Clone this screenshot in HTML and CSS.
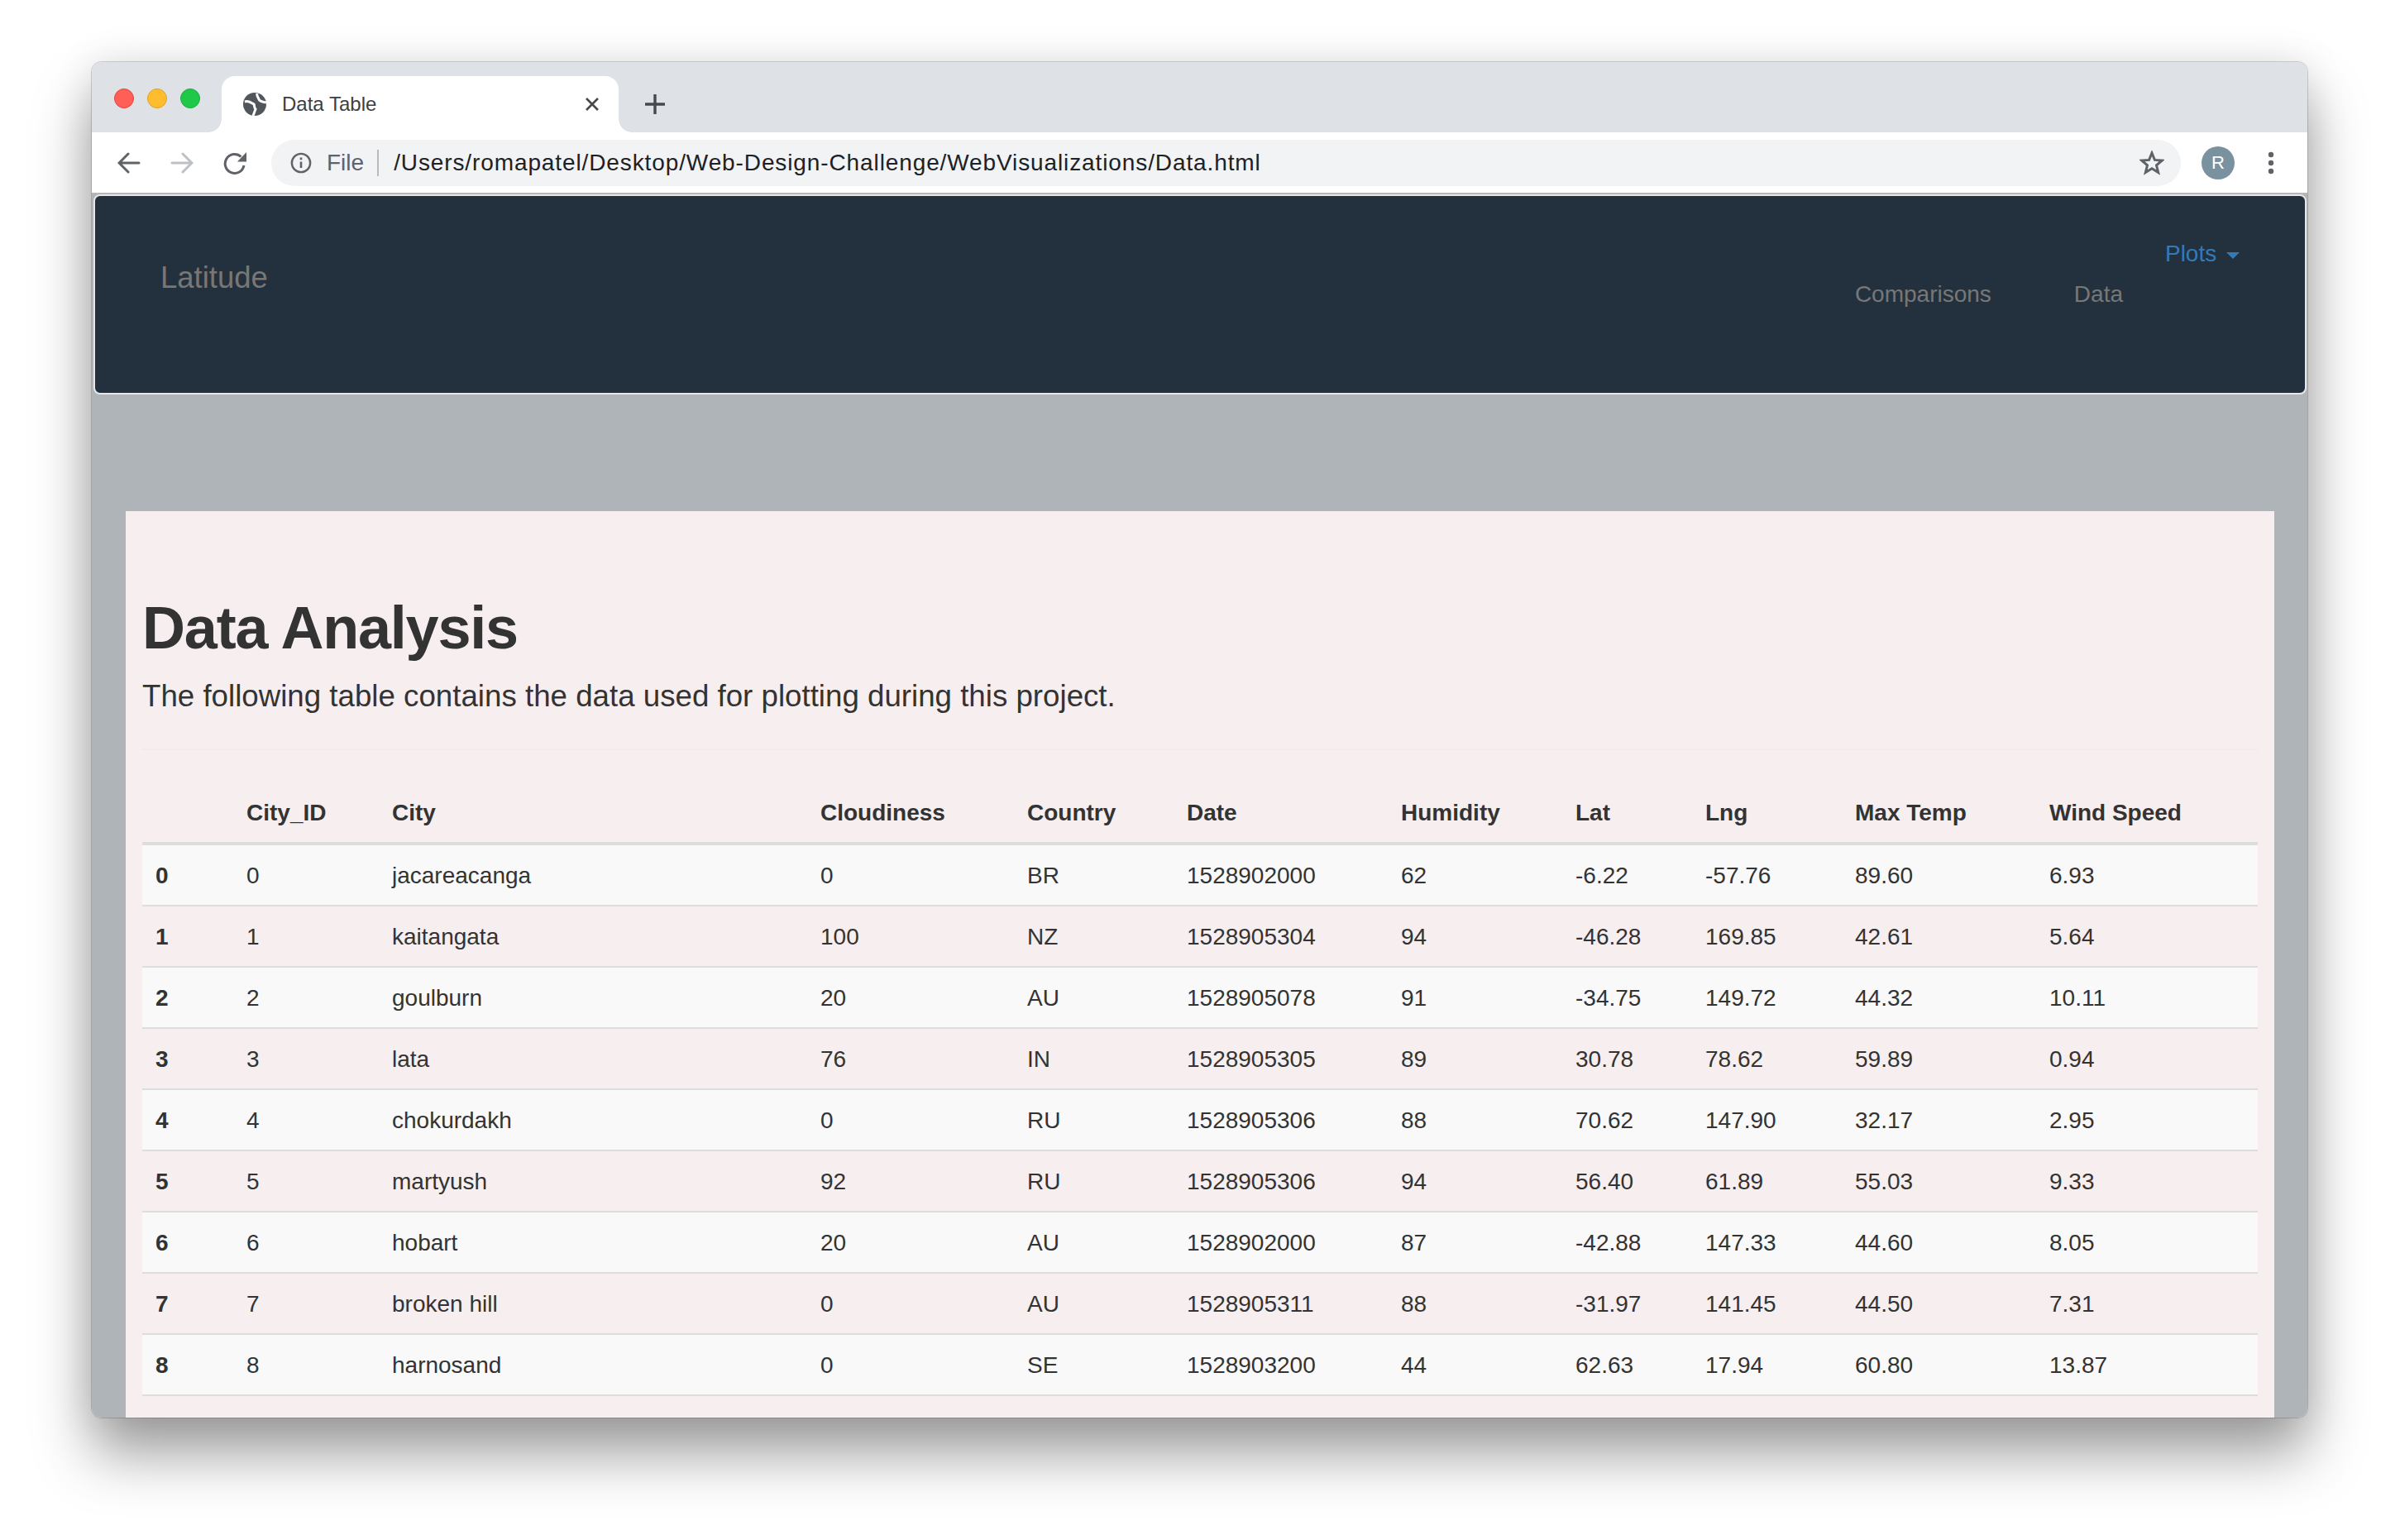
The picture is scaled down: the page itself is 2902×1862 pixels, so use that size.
FILE: index.html
```html
<!DOCTYPE html>
<html lang="en">
<head>
<meta charset="UTF-8">
<meta name="viewport" content="width=device-width, initial-scale=1.0">
<title>Data Table</title>
<link rel="stylesheet" href="styles.css">
</head>
<body>
<div class="window">
    <div class="tabstrip">
        <div class="lights">
            <span class="light red"></span>
            <span class="light yellow"></span>
            <span class="light green"></span>
        </div>
        <div class="tab">
            <svg class="globe" viewBox="0 0 28 28">
                <circle cx="14" cy="14" r="14" fill="#51565c"/>
                <path d="M2 11c5-2 8 2 11 3 1 2 0 4 2 6l-3 8M17 1c-1 3 1 4 2 7s5 3 9 4" stroke="#fff" stroke-width="3" fill="none"/>
            </svg>
            <span class="tab-title">Data Table</span>
            <svg class="tab-close" viewBox="0 0 16 16"><path d="M1 1l14 14M15 1L1 15" stroke="#45494e" stroke-width="2.6" fill="none"/></svg>
        </div>
        <svg class="new-tab" viewBox="0 0 24 24"><path d="M12 1v22M1 12h22" stroke="#45494e" stroke-width="3.4" stroke-linecap="round" fill="none"/></svg>
    </div>
    <div class="toolbar">
        <svg class="tool" viewBox="0 0 28 28"><path d="M26 14H3M13 3L2 14l11 11" stroke="#5f6368" stroke-width="3" stroke-linecap="round" fill="none"/></svg>
        <svg class="tool" viewBox="0 0 28 28"><path d="M2 14h23M15 3l11 11-11 11" stroke="#bdc0c4" stroke-width="3" stroke-linecap="round" fill="none"/></svg>
        <svg class="tool" viewBox="0 0 28 28"><path d="M21.500 6.500A11.500 11.500 0 1 0 25 17" stroke="#5f6368" stroke-width="3" fill="none"/><path d="M28 1v11.500H17z" fill="#5f6368"/></svg>
        <div class="omnibox">
            <svg class="info" viewBox="0 0 28 28"><circle cx="14" cy="14" r="12" stroke="#5f6368" stroke-width="2.6" fill="none"/><path d="M14 12.500v8M14 7v3" stroke="#5f6368" stroke-width="2.8"/></svg>
            <span class="scheme">File</span>
            <span class="url">/Users/romapatel/Desktop/Web-Design-Challenge/WebVisualizations/Data.html</span>
            <svg class="star" viewBox="0 0 30 30"><path d="M15 3l3.400 8.400 9 .6-6.900 5.800 2.200 8.800L15 21.800l-7.700 4.800 2.200-8.800L2.600 12l9-.6z" stroke="#5f6368" stroke-width="3" fill="none"/></svg>
        </div>
        <span class="avatar">R</span>
        <svg class="dots" viewBox="0 0 8 28"><circle cx="4" cy="4" r="3.200" fill="#5f6368"/><circle cx="4" cy="14" r="3.200" fill="#5f6368"/><circle cx="4" cy="24" r="3.200" fill="#5f6368"/></svg>
    </div>

    <div class="page">
        <nav class="navbar">
            <a class="brand">Latitude</a>
            <div class="nav-links">
                <a class="nav-plots">Plots <span class="caret"></span></a>
                <div class="nav-row">
                    <a class="nav-link">Comparisons</a>
                    <a class="nav-link">Data</a>
                </div>
            </div>
        </nav>

        <div class="content">
            <h1>Data Analysis</h1>
            <p class="lead">The following table contains the data used for plotting during this project.</p>
            <hr>
            <table>
                <colgroup>
                    <col class="c-index"><col class="c-id"><col class="c-city"><col class="c-cloud"><col class="c-country"><col class="c-date"><col class="c-hum"><col class="c-lat"><col class="c-lng"><col class="c-temp"><col class="c-wind">
                </colgroup>
                <thead>
                    <tr><th></th><th>City_ID</th><th>City</th><th>Cloudiness</th><th>Country</th><th>Date</th><th>Humidity</th><th>Lat</th><th>Lng</th><th>Max Temp</th><th>Wind Speed</th></tr>
                </thead>
                <tbody>
                    <tr><th>0</th><td>0</td><td>jacareacanga</td><td>0</td><td>BR</td><td>1528902000</td><td>62</td><td>-6.22</td><td>-57.76</td><td>89.60</td><td>6.93</td></tr>
                    <tr><th>1</th><td>1</td><td>kaitangata</td><td>100</td><td>NZ</td><td>1528905304</td><td>94</td><td>-46.28</td><td>169.85</td><td>42.61</td><td>5.64</td></tr>
                    <tr><th>2</th><td>2</td><td>goulburn</td><td>20</td><td>AU</td><td>1528905078</td><td>91</td><td>-34.75</td><td>149.72</td><td>44.32</td><td>10.11</td></tr>
                    <tr><th>3</th><td>3</td><td>lata</td><td>76</td><td>IN</td><td>1528905305</td><td>89</td><td>30.78</td><td>78.62</td><td>59.89</td><td>0.94</td></tr>
                    <tr><th>4</th><td>4</td><td>chokurdakh</td><td>0</td><td>RU</td><td>1528905306</td><td>88</td><td>70.62</td><td>147.90</td><td>32.17</td><td>2.95</td></tr>
                    <tr><th>5</th><td>5</td><td>martyush</td><td>92</td><td>RU</td><td>1528905306</td><td>94</td><td>56.40</td><td>61.89</td><td>55.03</td><td>9.33</td></tr>
                    <tr><th>6</th><td>6</td><td>hobart</td><td>20</td><td>AU</td><td>1528902000</td><td>87</td><td>-42.88</td><td>147.33</td><td>44.60</td><td>8.05</td></tr>
                    <tr><th>7</th><td>7</td><td>broken hill</td><td>0</td><td>AU</td><td>1528905311</td><td>88</td><td>-31.97</td><td>141.45</td><td>44.50</td><td>7.31</td></tr>
                    <tr><th>8</th><td>8</td><td>harnosand</td><td>0</td><td>SE</td><td>1528903200</td><td>44</td><td>62.63</td><td>17.94</td><td>60.80</td><td>13.87</td></tr>
                </tbody>
            </table>
        </div>
    </div>
</div>
</body>
</html>
```

FILE: styles.css
```css
html, body {
    margin: 0;
    height: 1862px;
    overflow: hidden;
    background-color: #fff;
}

body {
    padding: 75px 112px 0 111px;
    box-sizing: border-box;
    font-family: "Liberation Sans", Arial, sans-serif;
    color: #333;
}

/* browser window */
.window {
    height: 1639px;
    overflow: hidden;
    display: flex;
    flex-direction: column;
    border-radius: 12px;
    box-shadow: 0 0 0 1px rgba(0, 0, 0, 0.16), 0 44px 70px rgba(0, 0, 0, 0.38), 0 0 50px rgba(0, 0, 0, 0.1);
}

.tabstrip {
    height: 85px;
    flex: none;
    display: flex;
    align-items: flex-end;
    background-color: #dee1e5;
}

.lights {
    display: flex;
    gap: 16px;
    align-self: flex-start;
    padding: 32px 26px 0 27px;
}

.light {
    width: 24px;
    height: 24px;
    border-radius: 50%;
    box-sizing: border-box;
}

.red { background-color: #ff5f57; border: 1px solid #e5443d; }
.yellow { background-color: #ffbd2e; border: 1px solid #e0a125; }
.green { background-color: #20c84a; border: 1px solid #1cae3f; }

.tab {
    position: relative;
    width: 480px;
    height: 68px;
    display: flex;
    align-items: center;
    padding: 0 24px 0 26px;
    box-sizing: border-box;
    background-color: #fff;
    border-radius: 16px 16px 0 0;
}

/* the tab flares out into the toolbar */
.tab::before,
.tab::after {
    content: "";
    position: absolute;
    bottom: 0;
    width: 16px;
    height: 16px;
}

.tab::before {
    left: -16px;
    background: radial-gradient(circle at 0 0, #dee1e5 15.5px, #fff 16px);
}

.tab::after {
    right: -16px;
    background: radial-gradient(circle at 100% 0, #dee1e5 15.5px, #fff 16px);
}

.globe {
    width: 28px;
    height: 28px;
    margin-right: 19px;
}

.tab-title {
    flex: 1;
    font-size: 24px;
    color: #3c4043;
}

.tab-close {
    width: 16px;
    height: 16px;
}

.new-tab {
    width: 24px;
    height: 24px;
    margin: 0 0 22px 32px;
}

.toolbar {
    height: 75px;
    flex: none;
    display: flex;
    align-items: center;
    padding: 0 40px 0 31px;
    box-sizing: border-box;
    background-color: #fff;
    border-bottom: 2px solid #b5b7b9;
}

.tool {
    width: 28px;
    height: 28px;
    margin-right: 36px;
}

.tool:nth-child(3) {
    margin-right: 30px;
}

.omnibox {
    flex: 1;
    height: 56px;
    display: flex;
    align-items: center;
    padding: 0 20px 0 23px;
    background-color: #f1f3f4;
    border-radius: 28px;
}

.info {
    width: 26px;
    height: 26px;
    margin-right: 18px;
}

.scheme {
    font-size: 28px;
    color: #5f6368;
    padding-right: 16px;
    border-right: 2px solid #b8babd;
    line-height: 32px;
    margin-right: 18px;
}

.url {
    flex: 1;
    font-size: 28px;
    letter-spacing: 0.89px;
    color: #202124;
}

.star {
    width: 30px;
    height: 30px;
}

.avatar {
    width: 40px;
    height: 40px;
    margin-left: 25px;
    border-radius: 50%;
    background-color: #7a929f;
    color: #fff;
    font-size: 22px;
    line-height: 40px;
    text-align: center;
}

.dots {
    width: 8px;
    height: 28px;
    margin-left: 40px;
}

/* page */
.page {
    flex: 1;
    min-height: 0;
    padding: 0 1px 0 2px;
    background-color: #afb4b8;
}

.navbar {
    height: 242px;
    box-sizing: border-box;
    display: flex;
    justify-content: space-between;
    background-color: #23313f;
    border: 2px solid #e7e7e7;
    border-radius: 8px;
    margin-bottom: 141px;
}

.brand {
    font-size: 36.5px;
    line-height: 40px;
    padding: 79px 0 0 79px;
    color: #777;
}

.nav-links {
    display: flex;
    flex-direction: column;
    align-items: flex-end;
    padding: 50px 0 0;
}

.nav-plots {
    font-size: 28px;
    line-height: 40px;
    color: #337ab7;
    margin-right: 79px;
}

.caret {
    display: inline-block;
    margin-left: 4px;
    vertical-align: middle;
    border-top: 8px solid #337ab7;
    border-left: 8px solid transparent;
    border-right: 8px solid transparent;
}

.nav-row {
    display: flex;
    gap: 100px;
    margin: 9px 220px 0 0;
}

.nav-link {
    font-size: 28px;
    line-height: 40px;
    color: #777;
}

.content {
    margin: 0 39px;
    padding: 0 20px;
    background-color: #f7eeef;
    height: 1200px;
}

h1 {
    margin: 0;
    padding-top: 102px;
    font-size: 72px;
    line-height: 79px;
    letter-spacing: -1.2px;
    font-weight: bold;
    color: #333;
}

.lead {
    margin: 16px 0 0;
    font-size: 36.7px;
    line-height: 54px;
    color: #333;
}

hr {
    margin: 36px 0 0;
    border: 0;
    border-top: 2px solid #f1ecec;
}

/* table */
table {
    width: 100%;
    margin-top: 39px;
    table-layout: fixed;
    border-collapse: collapse;
    font-size: 28px;
    line-height: 40px;
}

.c-index { width: 110px; }
.c-id { width: 176px; }
.c-city { width: 518px; }
.c-cloud { width: 250px; }
.c-country { width: 193px; }
.c-date { width: 259px; }
.c-hum { width: 211px; }
.c-lat { width: 157px; }
.c-lng { width: 181px; }
.c-temp { width: 235px; }

th, td {
    padding: 17px 16px 15px;
    text-align: left;
}

thead th {
    border-bottom: 4px solid #ddd;
}

tbody th, tbody td {
    border-bottom: 2px solid #ddd;
}

tbody tr:nth-child(odd) {
    background-color: #f9f9f9;
}
```
